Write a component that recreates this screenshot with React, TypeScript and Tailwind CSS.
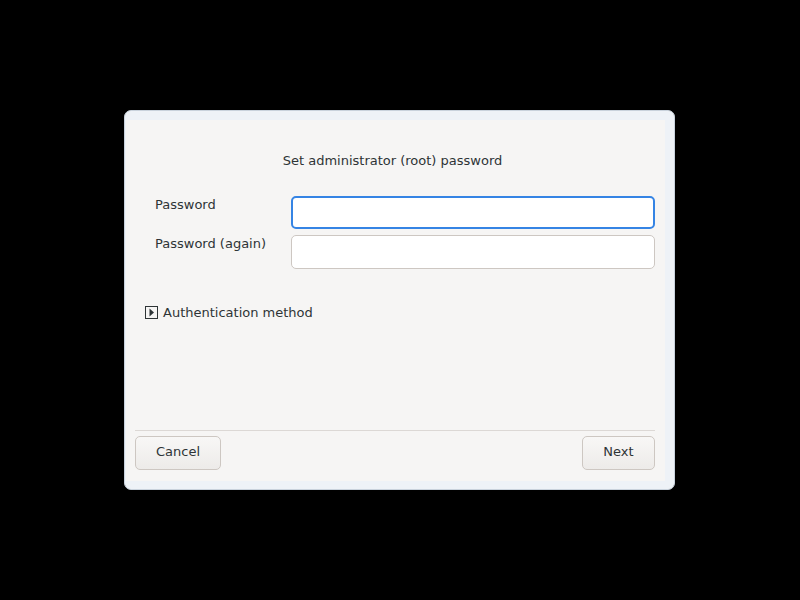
import { useState } from "react"

export default function App() {
  const [pw, setPw] = useState("")
  const [pw2, setPw2] = useState("")

  return (
    <div className="w-[800px] h-[600px] bg-black pt-[110px] pl-[124px] font-['DejaVu_Sans',sans-serif] text-[13px] text-[#2e3436]">
      <div className="w-[551px] h-[380px] rounded-[7px] border border-[#c9d2dc] bg-[#eef2f7] pl-px pr-[9px] pt-[9px] pb-[8px] flex">
        <div className="flex-1 bg-[#f6f5f4] flex flex-col pl-[9px] pr-[10px] pb-[11px]">
          <div className="text-center pt-[31px] pb-[25px] pr-[5px]">Set administrator (root) password</div>

          <div className="grid grid-cols-[136px_1fr] gap-y-[6px] pl-[20px]">
            <label className="-mt-px">Password</label>
            <input
              type="password"
              autoFocus
              value={pw}
              onChange={(e) => setPw(e.target.value)}
              className="h-[33px] rounded-[5px] bg-white border-2 border-[#3584e4] px-2 outline-none"
            />
            <label className="-mt-px">Password (again)</label>
            <input
              type="password"
              value={pw2}
              onChange={(e) => setPw2(e.target.value)}
              className="h-[34px] rounded-[5px] bg-white border border-[#cdc7c2] px-2 outline-none"
            />
          </div>

          <div className="flex items-center gap-[5px] mt-[34px] pl-[10px]">
            <span className="w-[13px] h-[13px] border border-[#2e3436] flex items-center justify-center">
              <svg width="7" height="9" viewBox="0 0 7 9">
                <path d="M1.5 0.5 L6 4.5 L1.5 8.5 Z" fill="#2e3436" />
              </svg>
            </span>
            <span>Authentication method</span>
          </div>

          <div className="flex-1" />

          <div className="border-t border-[#dcd8d5] pt-[5px] flex justify-between">
            <button className="w-[86px] h-[34px] pb-[2px] rounded-[5px] border border-[#cdc7c2] bg-gradient-to-b from-[#f8f7f6] to-[#edebe9]">
              Cancel
            </button>
            <button className="w-[73px] h-[34px] pb-[2px] rounded-[5px] border border-[#cdc7c2] bg-gradient-to-b from-[#f8f7f6] to-[#edebe9]">
              Next
            </button>
          </div>
        </div>
      </div>
    </div>
  )
}
